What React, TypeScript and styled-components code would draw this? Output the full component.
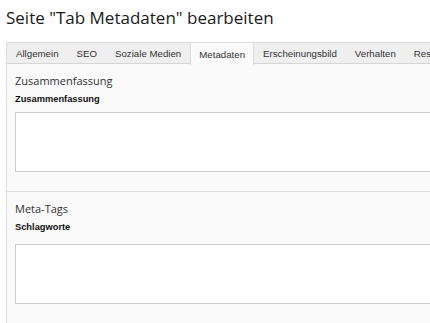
import styled, { createGlobalStyle } from "styled-components"

const GlobalStyle = createGlobalStyle`
    html, body {
        margin: 0;
        padding: 0;
        background: #fff;
        overflow: hidden;
    }
    body {
        font-family: "Liberation Sans", Arial, sans-serif;
        color: #333;
    }
`

const tabs = ["Allgemein", "SEO", "Soziale Medien", "Metadaten", "Erscheinungsbild", "Verhalten", "Ressourcen"]
const activeTab = "Metadaten"

const sections = [
    { title: "Zusammenfassung", label: "Zusammenfassung", gap: 7 },
    { title: "Meta-Tags", label: "Schlagworte", gap: 11 },
]

export default function App(){
    return(
        <Page>
            <GlobalStyle />
            <Title>Seite "Tab Metadaten" bearbeiten</Title>
            <Panel>
                <TabBar>
                    {tabs.map((t) => (
                        <Tab key={t} $active={t === activeTab}>{t}</Tab>
                    ))}
                </TabBar>
                {sections.map((s) => (
                    <Section key={s.title}>
                        <SectionTitle>{s.title}</SectionTitle>
                        <Label>{s.label}</Label>
                        <TextArea $gap={s.gap} />
                    </Section>
                ))}
            </Panel>
        </Page>
    )
}

const Page = styled.div`
    width: 700px;
    padding: 8px 0 0 6px;
    box-sizing: border-box;
`
const Title = styled.h1`
    margin: 0 0 14px;
    font-family: "Open Sans", "Noto Sans", sans-serif;
    font-size: 17px;
    font-weight: 400;
    line-height: 20px;
    color: #1a1a1a;
`
const Panel = styled.div`
    border: solid 1px #ddd;
    border-top: none;
    background: #fafafa;
`
const TabBar = styled.div`
    display: flex;
    height: 22px;
    background: #efefef;
    border-top: solid 1px #ddd;
    border-bottom: solid 1px #d5d5d5;
    box-sizing: border-box;
`
const Tab = styled.div<{ $active?: boolean }>`
    display: flex;
    align-items: center;
    padding: 0 8px;
    margin-top: -1px;
    box-sizing: border-box;
    font-size: 9.7px;
    white-space: nowrap;
    color: #333;
    background: ${(p) => (p.$active ? "#fafafa" : "transparent")};
    border-left: solid 1px ${(p) => (p.$active ? "#ddd" : "transparent")};
    border-right: solid 1px ${(p) => (p.$active ? "#ddd" : "transparent")};
    border-top: solid 1px #ddd;
    height: ${(p) => (p.$active ? "23px" : "22px")};
`
const Section = styled.div`
    padding: 9px 0 19px 8px;
    border-bottom: solid 1px #ddd;
    &:last-child{
        border-bottom: none;
    }
`
const SectionTitle = styled.div`
    font-family: "Open Sans", "Noto Sans", sans-serif;
    font-size: 11px;
    line-height: 16px;
    color: #333;
`
const Label = styled.div`
    margin-top: 4px;
    font-size: 9.3px;
    font-weight: 700;
    line-height: 12px;
    color: #111;
`
const TextArea = styled.div<{ $gap: number }>`
    margin-top: ${(p) => p.$gap}px;
    height: 60px;
    background: #fff;
    border: solid 1px #ccc;
    box-sizing: border-box;
`
